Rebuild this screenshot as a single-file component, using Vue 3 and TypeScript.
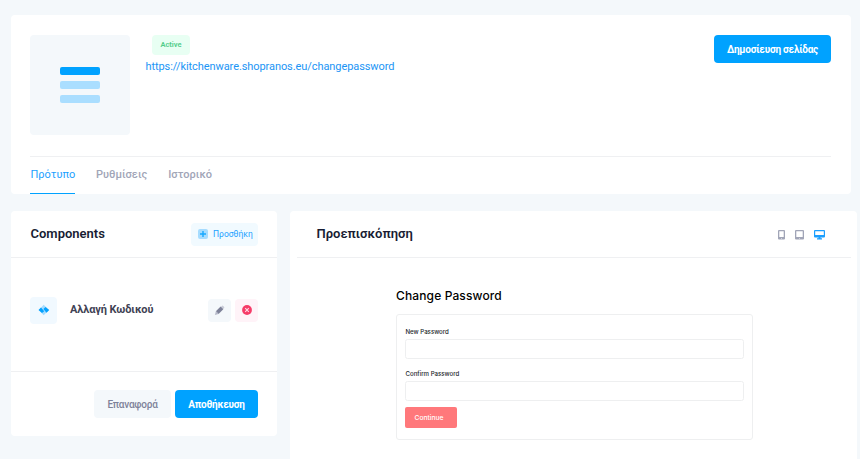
<script setup lang="ts">
import { ref } from 'vue'

const tabs: string[] = ['Πρότυπο', 'Ρυθμίσεις', 'Ιστορικό']
const activeTab = ref<string>(tabs[0])
const fields: string[] = ['New Password', 'Confirm Password']
</script>

<template>
  <div class="page">
    <section class="card summary">
      <div class="summary-top">
        <div class="thumb">
          <span class="bar strong"></span>
          <span class="bar"></span>
          <span class="bar"></span>
        </div>
        <div class="details">
          <span class="badge">Active</span>
          <a class="url">https://kitchenware.shopranos.eu/changepassword</a>
        </div>
        <button class="btn primary publish">Δημοσίευση σελίδας</button>
      </div>
      <nav class="tabs">
        <a
          v-for="tab in tabs"
          :key="tab"
          class="tab"
          :class="{ active: tab === activeTab }"
          @click="activeTab = tab"
        >{{ tab }}</a>
      </nav>
    </section>

    <div class="columns">
      <section class="card components">
        <header class="card-head">
          <h2>Components</h2>
          <button class="add">
            <svg width="10" height="10" viewBox="0 0 10 10">
              <rect width="10" height="10" rx="2" fill="#a6dcff" />
              <path d="M5 2v6M2 5h6" stroke="#17a8ff" stroke-width="1.4" />
            </svg>
            <span>Προσθήκη</span>
          </button>
        </header>
        <div class="item">
          <span class="item-icon">
            <svg width="12" height="12" viewBox="0 0 12 12">
              <path d="M5.7.8 11 6 5.7 11.2.7 6Z" fill="#a6dcff" />
              <path d="M3 3.6 6.2 7.2 4 8.9.5 6ZM7.5 3.1 11.2 6 8.5 8.7 5.4 4.9Z" fill="#05a2ff" />
            </svg>
          </span>
          <span class="item-name">Αλλαγή Κωδικού</span>
          <button class="icon-btn">
            <svg width="11" height="11" viewBox="0 0 11 11">
              <path d="M7.8.9Q8.5.3 9.2 1L10 1.8Q10.7 2.5 10 3.2L8.8 4.3 6.7 2.2Z" fill="#c9ccd8" />
              <path d="M6.6 1.6 9.3 4.3 4.6 9 1.9 6.3Z" fill="#7e8299" />
              <path d="M1.9 6.3 4.6 9 .9 10.1Z" fill="#b5b8c8" />
            </svg>
          </button>
          <button class="icon-btn danger">
            <svg width="10" height="10" viewBox="0 0 10 10">
              <circle cx="5" cy="5" r="4.9" fill="#f63c68" />
              <path d="m3.2 3.2 3.6 3.6M6.8 3.2 3.2 6.8" stroke="#ffdbe5" stroke-width="1.1" />
            </svg>
          </button>
        </div>
        <footer class="actions">
          <button class="btn light">Επαναφορά</button>
          <button class="btn primary save">Αποθήκευση</button>
        </footer>
      </section>

      <section class="card preview">
        <header class="preview-head">
          <h2>Προεπισκόπηση</h2>
          <div class="devices">
            <svg width="7" height="10" viewBox="0 0 7 10">
              <path fill="#a1a5b7" fill-rule="evenodd" d="M1 0h5q1 0 1 1v7.5q0 1-1 1H1Q0 9.500 0 8.500V1Q0 0 1 0ZM1.300 1.200v5.800h4.400V1.200ZM3 8v.6h1V8Z" />
            </svg>
            <svg width="9" height="10" viewBox="0 0 9 10">
              <path fill="#a1a5b7" fill-rule="evenodd" d="M1 0h7q1 0 1 1v7.500q0 1-1 1H1Q0 9.500 0 8.500V1Q0 0 1 0ZM1.300 1.200v5.800h6.400V1.200ZM4 8v.6h1V8Z" />
            </svg>
            <svg width="11" height="10" viewBox="0 0 11 10">
              <path fill="#1b9fff" fill-rule="evenodd" d="M1 0h9q1 0 1 1v5.500q0 1-1 1H6.500V8.300H8V9.500H3V8.300H4.500V7.500H1q-1 0-1-1V1Q0 0 1 0ZM1.200 1.200v3.900h8.600V1.200Z" />
            </svg>
          </div>
        </header>
        <div class="preview-body">
          <h1>Change Password</h1>
          <form class="form" @submit.prevent>
            <label v-for="field in fields" :key="field" class="field">
              <span>{{ field }}</span>
              <input type="password" />
            </label>
            <button class="continue">Continue</button>
          </form>
        </div>
      </section>
    </div>
  </div>
</template>

<style>
body {
  background: #f4f8fb;
  overflow: hidden;
}
</style>

<style scoped>
.page {
  box-sizing: border-box;
  height: 459px;
  padding: 15px 3px 0 11px;
  overflow: hidden;
  background: #f4f8fb;
  font-family: Roboto, "Liberation Sans", sans-serif;
}
.page * {
  box-sizing: border-box;
}
button {
  border: 0;
  padding: 0;
  font: inherit;
  white-space: nowrap;
}
h1,
h2 {
  margin: 0;
}
.card {
  background: #fff;
  border-radius: 4px;
}
.summary {
  width: 840px;
  height: 179px;
  padding: 20px 20px 0 19px;
}
.summary-top {
  display: flex;
  height: 121px;
}
.thumb {
  display: flex;
  flex-direction: column;
  align-items: center;
  gap: 6px;
  width: 100px;
  height: 100px;
  padding-top: 32px;
  border-radius: 4px;
  background: #f4f8fb;
}
.bar {
  width: 40px;
  height: 8px;
  border-radius: 2px;
  background: #aadeff;
}
.bar.strong {
  background: #00a2ff;
}
.details {
  display: flex;
  flex-direction: column;
  align-items: flex-start;
  flex: 1;
  padding-left: 15.5px;
}
.badge {
  height: 20px;
  width: 38px;
  margin-left: 6.5px;
  border-radius: 4px;
  background: #e8fff3;
  color: #50cd89;
  font-size: 7.5px;
  font-weight: 600;
  line-height: 20px;
  text-align: center;
}
.url {
  margin-top: 4px;
  color: #1b95f5;
  font-size: 11px;
  letter-spacing: -0.08px;
  line-height: 15px;
}
.btn {
  height: 28px;
  border-radius: 4px;
  font-size: 10px;
  letter-spacing: -0.23px;
  font-weight: 500;
}
.primary {
  background: #00a2ff;
  color: #fff;
  font-weight: 700;
}
.publish {
  width: 117px;
}
.tabs {
  display: flex;
  gap: 21px;
  height: 38px;
  border-top: 1px solid #eff0f2;
}
.tab {
  height: 37px;
  color: #a1a5b7;
  font-size: 11px;
  font-weight: 500;
  line-height: 35px;
}
.tab.active {
  width: 45px;
  padding-left: 0.5px;
  border-bottom: 1px solid #00a2ff;
  color: #1b9fff;
  font-weight: 400;
}
.columns {
  display: flex;
  align-items: flex-start;
  gap: 13px;
  margin-top: 17px;
}
.components {
  width: 266px;
  height: 225px;
}
.card-head {
  display: flex;
  align-items: center;
  justify-content: space-between;
  height: 47px;
  padding: 0 19px;
  border-bottom: 1px solid #eff0f2;
}
h2 {
  padding-left: 0.5px;
  color: #181c32;
  font-size: 13px;
  font-weight: 600;
  line-height: 16px;
}
.add {
  display: flex;
  align-items: center;
  gap: 5px;
  width: 67px;
  height: 23px;
  padding-left: 7px;
  border-radius: 4px;
  background: #f1faff;
  color: #1b9fff;
  font-size: 8.5px;
  font-weight: 400;
}
.item {
  display: flex;
  align-items: center;
  gap: 4px;
  height: 113px;
  padding: 0 19px;
  padding-bottom: 9px;
}
.item-icon {
  display: grid;
  place-items: center;
  width: 27px;
  height: 27px;
  border-radius: 4px;
  background: #f1f9ff;
}
.item-name {
  flex: 1;
  padding: 0 0 2px 9px;
  color: #3f4254;
  font-size: 11px;
  font-weight: 700;
  letter-spacing: -0.12px;
}
.icon-btn {
  display: grid;
  place-items: center;
  width: 23px;
  height: 23px;
  border-radius: 4px;
  background: #f4f8fb;
}
.danger {
  background: #fff3f8;
}
.actions {
  display: flex;
  justify-content: flex-end;
  gap: 4px;
  padding: 18px 19px;
  border-top: 1px solid #eff0f2;
}
.light {
  width: 77px;
  background: #f4f8fb;
  color: #7e8299;
}
.save {
  width: 83px;
}
.preview {
  width: 567px;
  height: 270px;
  padding: 0 6px 0 7px;
}
.preview-head {
  display: flex;
  align-items: center;
  justify-content: space-between;
  height: 47px;
  padding: 0 26px 0 19px;
  border-bottom: 1px solid #eff0f2;
}
.devices {
  display: flex;
  gap: 10px;
  align-items: center;
}
.devices svg {
  position: relative;
  top: 1px;
}
.preview-body {
  width: 357px;
  margin: 30px 0 0 99px;
  font-family: Inter, "Liberation Sans", sans-serif;
}
h1 {
  color: #000;
  font-size: 12px;
  font-weight: 500;
  letter-spacing: 0.13px;
  line-height: 16px;
}
.form {
  height: 126px;
  margin-top: 10px;
  padding: 12px 8px;
  border: 1px solid #eeeff0;
  border-radius: 3px;
}
.field {
  display: block;
  height: 42px;
  color: #212529;
  font-size: 6.1px;
  font-weight: 500;
}
.field span {
  display: block;
  height: 12px;
  padding-left: 0.5px;
  line-height: 10px;
}
.field input {
  display: block;
  width: 339px;
  height: 20px;
  border: 1px solid #eeeff0;
  border-radius: 2.5px;
  background: #fff;
}
.continue {
  display: block;
  width: 52px;
  height: 21px;
  margin-top: -4px;
  padding-right: 4px;
  border-radius: 2px;
  background: #ff787b;
  color: #fff;
  font-size: 6.7px;
  font-weight: 500;
}
</style>
